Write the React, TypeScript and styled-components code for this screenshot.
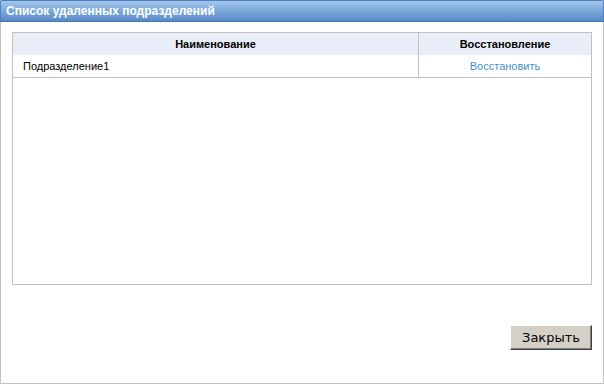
import React from 'react';
import styled, { createGlobalStyle } from 'styled-components';

const GlobalStyle = createGlobalStyle`
  html, body {
    margin: 0;
    padding: 0;
    background: #ffffff;
  }
  body {
    font-family: 'Liberation Sans', Arial, sans-serif;
  }
`;

const Window = styled.div`
  box-sizing: border-box;
  width: 604px;
  height: 384px;
  border: 1px solid #c3c3c3;
  border-top: none;
  display: flex;
  flex-direction: column;
  background: #ffffff;
`;

const TitleBar = styled.div`
  box-sizing: border-box;
  height: 22px;
  margin: 0 -1px;
  border: 1px solid #4f7fbf;
  border-bottom-color: #4673b3;
  border-radius: 2px 2px 0 0;
  background: linear-gradient(to bottom, #a3c7ec 0%, #7eabdc 45%, #5a89c9 100%);
  color: #ffffff;
  font-weight: bold;
  font-size: 12px;
  line-height: 20px;
  padding-left: 5px;
  white-space: nowrap;
`;

const Body = styled.div`
  flex: 1;
  display: flex;
  flex-direction: column;
  padding: 10px 11px 0 11px;
`;

const GridBox = styled.div`
  box-sizing: border-box;
  height: 253px;
  border: 1px solid #c0c0c0;
`;

const Table = styled.table`
  width: 100%;
  border-collapse: collapse;
  font-size: 11px;
  color: #000000;
`;

const HeadCell = styled.th<{ wide?: boolean }>`
  height: 22px;
  padding: 0;
  background: #e8eef7;
  font-weight: bold;
  text-align: center;
  width: ${(props) => (props.wide ? 'auto' : '172px')};
  border-left: ${(props) => (props.wide ? 'none' : '1px solid #c0c0c0')};
`;

const Cell = styled.td<{ action?: boolean }>`
  height: 22px;
  padding: 0 0 0 ${(props) => (props.action ? '0' : '10px')};
  text-align: ${(props) => (props.action ? 'center' : 'left')};
  border-bottom: 1px solid #c0c0c0;
  border-left: ${(props) => (props.action ? '1px solid #c0c0c0' : 'none')};
`;

const RestoreLink = styled.a`
  color: #3f8fcf;
  text-decoration: none;
  cursor: pointer;
`;

const Footer = styled.div`
  display: flex;
  justify-content: flex-end;
  padding-top: 40px;
`;

const CloseButton = styled.button`
  box-sizing: border-box;
  width: 82px;
  height: 25px;
  padding: 0;
  background: #d4d0c8;
  border: 1px solid;
  border-color: #ffffff #404040 #404040 #ffffff;
  box-shadow: inset -1px -1px 0 #808080;
  font-family: 'DejaVu Sans', Tahoma, sans-serif;
  font-size: 13px;
  color: #000000;
  cursor: pointer;
`;

export default function App() {
  return (
    <>
      <GlobalStyle />
      <Window>
        <TitleBar>Список удаленных подразделений</TitleBar>
        <Body>
          <GridBox>
            <Table>
              <thead>
                <tr>
                  <HeadCell wide>Наименование</HeadCell>
                  <HeadCell>Восстановление</HeadCell>
                </tr>
              </thead>
              <tbody>
                <tr>
                  <Cell>Подразделение1</Cell>
                  <Cell action>
                    <RestoreLink>Восстановить</RestoreLink>
                  </Cell>
                </tr>
              </tbody>
            </Table>
          </GridBox>
          <Footer>
            <CloseButton>Закрыть</CloseButton>
          </Footer>
        </Body>
      </Window>
    </>
  );
}
